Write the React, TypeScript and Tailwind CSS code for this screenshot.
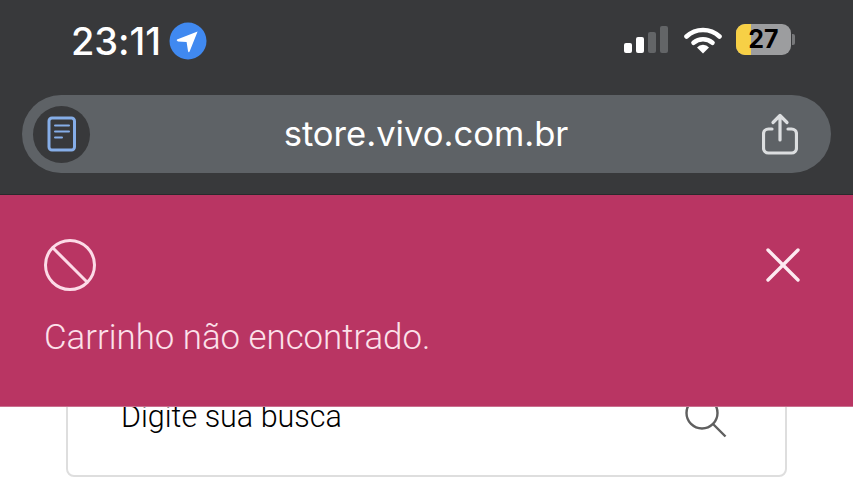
function LocationBadge() {
  return (
    <svg width="38" height="38" viewBox="0 0 38 38" className="ml-[8px] shrink-0">
      <circle cx="19" cy="19" r="18.5" fill="#4089f0" />
      <path d="M8 17.6 L28.6 9.4 L20.6 29.6 Q19.6 31 19 29 L17.6 20 L9 19.4 Q7 18.6 8 17.6Z" fill="#fff" />
    </svg>
  );
}

function SignalBars() {
  return (
    <div className="flex items-end gap-[4px]">
      <div className="w-[8px] h-[10px] rounded-[2px] bg-white" />
      <div className="w-[8px] h-[16px] rounded-[2px] bg-white" />
      <div className="w-[8px] h-[21px] rounded-[2px] bg-[#636567]" />
      <div className="w-[8px] h-[27px] rounded-[2px] bg-[#636567]" />
    </div>
  );
}

function Wifi() {
  return (
    <svg width="38" height="28" viewBox="0 0 38 28">
      <path d="M2.5 10.5 A24 24 0 0 1 35.5 10.5" fill="none" stroke="#fff" strokeWidth="4.6" strokeLinecap="round" />
      <path d="M9.5 16.8 A14.5 14.5 0 0 1 28.5 16.8" fill="none" stroke="#fff" strokeWidth="4.6" strokeLinecap="round" />
      <path d="M13 21.5 A8 8 0 0 1 25 21.5 L19 27.5Z" fill="#fff" />
    </svg>
  );
}

function Battery() {
  return (
    <div className="flex items-center gap-[1px] ml-[14px]">
      <div className="relative w-[55px] h-[31px] rounded-[9px] overflow-hidden bg-[#9c9d9f] flex items-center justify-center">
        <div className="absolute left-0 top-0 bottom-0 w-[15px] bg-[#f7d046]" />
        <span className="relative text-[25px] leading-none font-bold text-black font-['Inter',sans-serif]">27</span>
      </div>
      <div className="w-[3px] h-[11px] rounded-r-[2px] bg-[#77787a]" />
    </div>
  );
}

function ReaderButton() {
  return (
    <div className="w-[57px] h-[57px] rounded-full bg-[#38393b] flex items-center justify-center">
      <svg width="30" height="36" viewBox="0 0 30 36" fill="none">
        <rect x="2" y="2" width="25.5" height="32" rx="3" stroke="#86aee8" strokeWidth="3" />
        <path d="M8 9.5H22M8 15.5H22M8 21.5H15" stroke="#86aee8" strokeWidth="2" strokeLinecap="round" />
      </svg>
    </div>
  );
}

function ShareIcon() {
  return (
    <svg width="36" height="42" viewBox="0 0 36 42" fill="none" stroke="#dcdee0" strokeWidth="3.2" strokeLinecap="round" strokeLinejoin="round">
      <path d="M10 16H6.5a5 5 0 0 0-5 5v14a5 5 0 0 0 5 5h23a5 5 0 0 0 5-5V21a5 5 0 0 0-5-5H26" />
      <path d="M18 27V3M11 9.5l7-7 7 7" />
    </svg>
  );
}

export default function App() {
  return (
    <div className="w-[853px] h-[500px] overflow-hidden bg-white font-['Roboto',sans-serif]">
      <header className="h-[195px] bg-[#38393b] border-b border-[#2a2a2c] px-[22px]">
        <div className="h-[95px] flex items-start justify-between">
          <div className="flex items-center pl-[49px] pt-[22px]">
            <span className="text-[38px] leading-[38px] font-medium text-white font-['Inter',sans-serif] tracking-[-0.1px]">23:11</span>
            <LocationBadge />
          </div>
          <div className="flex items-center pt-[24px] pr-[36px]">
            <SignalBars />
            <div className="ml-[16px]">
              <Wifi />
            </div>
            <Battery />
          </div>
        </div>
        <div className="h-[78px] rounded-full bg-[#5e6266] flex items-center justify-between pl-[11px] pr-[33px]">
          <ReaderButton />
          <span className="text-[34.6px] leading-none text-white font-['Inter',sans-serif] font-normal -translate-y-[1px]">store.vivo.com.br</span>
          <ShareIcon />
        </div>
      </header>

      <section className="relative z-10 h-[212px] bg-[#b93563] px-[44px] pt-[44px] border-b border-[#c9708f]">
        <div className="flex items-center justify-between h-[52px]">
          <svg width="52" height="52" viewBox="0 0 52 52" fill="none" stroke="#fcdbe7" strokeWidth="3">
            <circle cx="26" cy="26" r="24.5" />
            <path d="M9 9L43 43" />
          </svg>
          <svg width="34" height="34" viewBox="0 0 34 34" fill="none" stroke="#fdeaf1" strokeWidth="3.4" strokeLinecap="round" className="mr-[9px]">
            <path d="M2 2L32 32M32 2L2 32" />
          </svg>
        </div>
        <p className="mt-[26px] text-[34.8px] leading-[40px] font-light text-[#fce1ea]">Carrinho não encontrado.</p>
      </section>

      <div className="relative -mt-[40px] ml-[66px] w-[721px] h-[110px] bg-white border-2 border-[#dedede] rounded-[8px] flex items-start justify-between pl-[53px] pr-[58px] pt-[28px]">
        <span className="text-[30.5px] leading-[40px] font-light text-black">Digite sua busca</span>
        <svg width="42" height="42" viewBox="0 0 42 42" fill="none" stroke="#5f5f5f" strokeWidth="2.4" className="-mt-[1px]">
          <circle cx="17" cy="17" r="15.5" />
          <path d="M28 28L40.5 40.5" />
        </svg>
      </div>
    </div>
  );
}
